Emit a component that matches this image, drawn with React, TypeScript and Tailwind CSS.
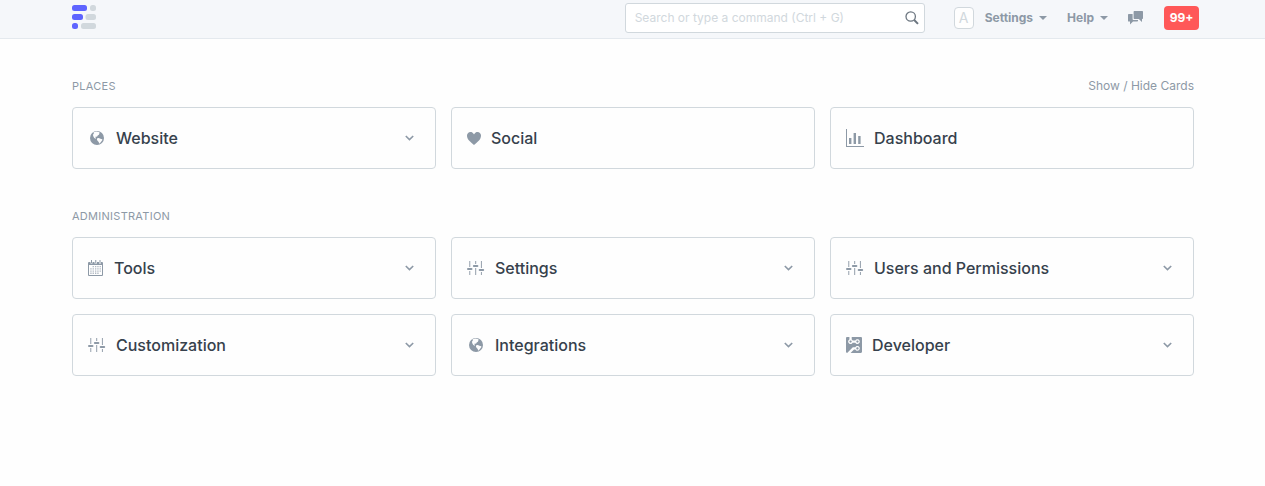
import type { ReactNode } from "react";

function Logo() {
  return (
    <svg width="24" height="24" viewBox="0 0 24 24" aria-hidden="true">
      <g fill="#5e64ff">
        <rect x="0" y="0" width="15" height="6" rx="2.5" />
        <rect x="0" y="9" width="11" height="6" rx="2.5" />
        <rect x="0" y="18" width="6" height="6" rx="2.5" />
      </g>
      <g fill="#d1d8dd">
        <rect x="18" y="0" width="6" height="6" rx="2.5" />
        <rect x="13.5" y="9" width="10.5" height="6" rx="2.5" />
        <rect x="9" y="18" width="15" height="6" rx="2.5" />
      </g>
    </svg>
  );
}

function SearchIcon() {
  return (
    <svg width="14" height="14" viewBox="0 0 14 14" fill="none" stroke="#6c7680" aria-hidden="true">
      <circle cx="5.7" cy="5.5" r="4.7" strokeWidth="1.3" />
      <path d="M9.2 9l3.8 3.9" strokeWidth="2" />
    </svg>
  );
}

function ChatIcon() {
  return (
    <svg width="16" height="14" viewBox="0 0 16 14" fill="currentColor" aria-hidden="true">
      <path d="M6.300 0h8c.4 0 .7.3.7.7v6.600c0 .4-.3.7-.7.7H14v3L10.800 8H6.300c-.4 0-.7-.3-.7-.7V.7c0-.4.3-.7.7-.7z" />
      <path d="M.7 3h3.900v5.200c0 .5.3.8.8.8h4.600v.8c0 .5-.3.8-.8.8H5L2 13.500v-2.900H.7c-.4 0-.7-.3-.7-.7V3.700c0-.4.3-.7.7-.7z" />
    </svg>
  );
}

function Caret() {
  return (
    <svg width="8" height="4" viewBox="0 0 8 4" fill="currentColor" aria-hidden="true">
      <path d="M0 0h8L4 4z" />
    </svg>
  );
}

function Chevron() {
  return (
    <svg width="9" height="6" viewBox="0 0 9 6" fill="none" stroke="currentColor" aria-hidden="true">
      <path d="M.8 1l3.700 3.600L8.200 1" strokeWidth="1.600" />
    </svg>
  );
}

function GlobeIcon() {
  return (
    <svg width="18" height="14" viewBox="-2 0 18 14" aria-hidden="true">
      <circle cx="7" cy="7" r="7" fill="currentColor" />
      <path
        fill="#fefefe"
        d="M3.600 1.200L6.500.5l2.200.4 1.300 1-1.100.9.300.8-1.500.9-.7 1.200-1.200-.2-.4.900.6.6-.3.700-1.400-.7-.9-1.600-.5-1.700.9-.9z"
      />
      <path fill="#fefefe" d="M7.200 7.300l1.600-.3 1.600.7 1.800.5.200.9-1.100 1.500-1 1.200-1.100.9-.5-1.700-1.200-1.300-.6-1.200z" />
    </svg>
  );
}

function HeartIcon() {
  return (
    <svg width="14" height="13" viewBox="0 2 12 11" fill="currentColor" aria-hidden="true">
      <path d="M11.200 3c-.52-.63-1.250-.95-2.200-1-.97 0-1.690.42-2.200 1-.51.58-.78.92-.8 1-.02-.08-.28-.42-.8-1-.52-.58-1.170-1-2.200-1-.95.05-1.690.38-2.200 1-.52.61-.78 1.280-.8 2 0 .52.09 1.520.67 2.670C1.250 8.820 3.010 10.610 6 13c2.980-2.390 4.770-4.170 5.340-5.330C11.910 6.510 12 5.500 12 5c-.02-.72-.28-1.390-.8-2z" />
    </svg>
  );
}

function ChartIcon() {
  return (
    <svg width="18" height="18" viewBox="0 0 18 18" fill="currentColor" aria-hidden="true">
      <path d="M0 0h1v17h17v1H0z" />
      <path d="M3 9h2.400v6H3zM7.600 4H10v11H7.600zM12.200 7h2.400v8h-2.400z" />
    </svg>
  );
}

function CalendarIcon() {
  return (
    <svg width="16" height="16" viewBox="0 0 16 16" fill="currentColor" aria-hidden="true">
      <path
        fillRule="evenodd"
        d="M1 2h1.500v1.500h2V2h2v1.500h2.500V2h2v1.500h2V2H14a1 1 0 0 1 1 1v12a1 1 0 0 1-1 1H1a1 1 0 0 1-1-1V3a1 1 0 0 1 1-1zM1 5v9.500a.5.5 0 0 0 .5.5h12a.5.5 0 0 0 .5-.5V5z"
      />
      <path d="M3 0h1v3H3zM7.250 0h1v3h-1zM11.500 0h1v3h-1z" />
      <path
        opacity=".7"
        d="M4.600 6h1.300v1.300H4.600zM7 6h1.300v1.300H7zM9.300 6h1.300v1.300H9.300zM11.600 6h1.300v1.300h-1.300zM2.300 8.200h1.300v1.300H2.300zM4.600 8.200h1.300v1.300H4.600zM7 8.200h1.300v1.300H7zM9.300 8.200h1.300v1.300H9.300zM11.600 8.200h1.300v1.300h-1.300zM2.300 10.400h1.300v1.300H2.300zM4.600 10.400h1.300v1.300H4.600zM7 10.400h1.300v1.300H7zM9.300 10.400h1.300v1.300H9.300zM11.600 10.400h1.300v1.300h-1.300zM2.300 12.600h1.300v1.300H2.300zM4.600 12.600h1.300v1.300H4.600zM7 12.600h1.300v1.300H7zM9.300 12.600h1.300v1.300H9.300z"
      />
    </svg>
  );
}

function SlidersIcon() {
  return (
    <svg width="18" height="14" viewBox="0 0 18 14" fill="currentColor" aria-hidden="true">
      <path
        opacity=".85"
        d="M2.200 0h1.100v6H2.200zM2.200 10h1.100v4H2.200zM8.100 0h1.100v3H8.100zM8.100 7h1.100v7H8.100zM13.900 0H15v7h-1.100zM13.900 11H15v3h-1.100z"
      />
      <rect x="0" y="7" width="5.500" height="2" rx="1" />
      <rect x="5.900" y="4" width="5.500" height="2" rx="1" />
      <rect x="11.700" y="8" width="5.500" height="2" rx="1" />
    </svg>
  );
}

function CircuitIcon() {
  return (
    <svg width="16" height="16" viewBox="0 1 14 14" fill="currentColor" aria-hidden="true">
      <path d="M3 5c0-.55.45-1 1-1s1 .45 1 1-.45 1-1 1-1-.45-1-1zm8 0c0-.55-.45-1-1-1s-1 .45-1 1 .45 1 1 1 1-.45 1-1zm0 6c0-.55-.45-1-1-1s-1 .45-1 1 .45 1 1 1 1-.45 1-1zm2-10H5v2.170c.36.19.64.47.83.83h2.340c.42-.78 1.330-1.280 2.340-1.050.75.19 1.360.8 1.530 1.550.31 1.380-.72 2.590-2.050 2.590-.8 0-1.480-.44-1.830-1.090H5.830c-.42.8-1.330 1.280-2.340 1.030-.73-.17-1.340-.78-1.520-1.520C1.720 4.490 2.200 3.590 3 3.170V1H1c-.55 0-1 .45-1 1v12c0 .55.45 1 1 1l5-5h2.170c.42-.78 1.330-1.280 2.340-1.050.75.19 1.360.8 1.530 1.550.31 1.380-.72 2.590-2.050 2.590-.8 0-1.480-.44-1.830-1.090H6.990L4 15h9c.55 0 1-.45 1-1V2c0-.55-.45-1-1-1z" />
    </svg>
  );
}

type CardItem = { label: string; icon: ReactNode; menu?: boolean };

const places: CardItem[] = [
  { label: "Website", icon: <GlobeIcon />, menu: true },
  { label: "Social", icon: <HeartIcon /> },
  { label: "Dashboard", icon: <ChartIcon /> },
];

const administration: CardItem[] = [
  { label: "Tools", icon: <CalendarIcon />, menu: true },
  { label: "Settings", icon: <SlidersIcon />, menu: true },
  { label: "Users and Permissions", icon: <SlidersIcon />, menu: true },
  { label: "Customization", icon: <SlidersIcon />, menu: true },
  { label: "Integrations", icon: <GlobeIcon />, menu: true },
  { label: "Developer", icon: <CircuitIcon />, menu: true },
];

const cardClass =
  "flex items-center gap-2.5 rounded border border-[#d1d8dd] py-[18px] pl-[15px] pr-[21px] text-left text-[#8d99a6] hover:bg-[#fafbfc]";

function Card({ label, icon, menu }: CardItem) {
  const title = <span className="grow text-base font-medium text-[#36414c]">{label}</span>;
  if (menu) {
    return (
      <button type="button" className={cardClass}>
        {icon}
        {title}
        <Chevron />
      </button>
    );
  }
  return (
    <a href="#" className={cardClass}>
      {icon}
      {title}
    </a>
  );
}

function Section({ title, items, action }: { title: string; items: CardItem[]; action?: ReactNode }) {
  return (
    <section className="pt-[39px]">
      <div className="mb-[13px] flex items-center justify-between text-[#8d99a6]">
        <h2 className="text-[11px] leading-4 tracking-wide uppercase">{title}</h2>
        {action}
      </div>
      <div className="grid grid-cols-3 gap-[15px]">
        {items.map((item) => (
          <Card key={item.label} {...item} />
        ))}
      </div>
    </section>
  );
}

export default function App() {
  return (
    <div className="min-h-screen bg-[#fefefe] font-['Inter',sans-serif] text-[#36414c]">
      <header className="flex items-start justify-between border-b border-[#e4e9ee] bg-[#f5f7fa] pr-[66px] pb-[5px] pl-[72px] pt-[3px]">
        <a href="#" aria-label="Home" className="pt-0.5">
          <Logo />
        </a>
        <div className="flex items-center text-[#8d99a6]">
          <label className="mr-[29px] flex h-[30px] w-[300px] items-center rounded-[3px] border border-[#d1d8dd] bg-white pr-[5px] pl-[9px]">
            <input
              type="text"
              aria-label="Search"
              placeholder="Search or type a command (Ctrl + G)"
              className="min-w-0 grow text-xs text-[#36414c] outline-none placeholder:text-[#d1d8dd]"
            />
            <SearchIcon />
          </label>
          <button type="button" className="flex items-center text-xs font-bold">
            <span className="mr-[11px] flex h-[22px] w-5 items-center justify-center rounded border border-[#d1d8dd] bg-[#fefefe] text-sm font-normal text-[#d1d8dd]">
              A
            </span>
            Settings
            <span className="ml-1.5">
              <Caret />
            </span>
          </button>
          <button type="button" className="ml-5 flex items-center text-xs font-bold">
            Help
            <span className="ml-1.5">
              <Caret />
            </span>
          </button>
          <button type="button" aria-label="Chat" className="ml-5">
            <ChatIcon />
          </button>
          <button type="button" className="ml-5 h-6 w-[35px] rounded bg-[#ff5858] text-xs font-bold text-white">
            99+
          </button>
        </div>
      </header>
      <main className="pr-[71px] pl-[72px]">
        <Section
          title="Places"
          items={places}
          action={
            <a href="#" className="text-xs">
              Show / Hide Cards
            </a>
          }
        />
        <Section title="Administration" items={administration} />
      </main>
    </div>
  );
}
